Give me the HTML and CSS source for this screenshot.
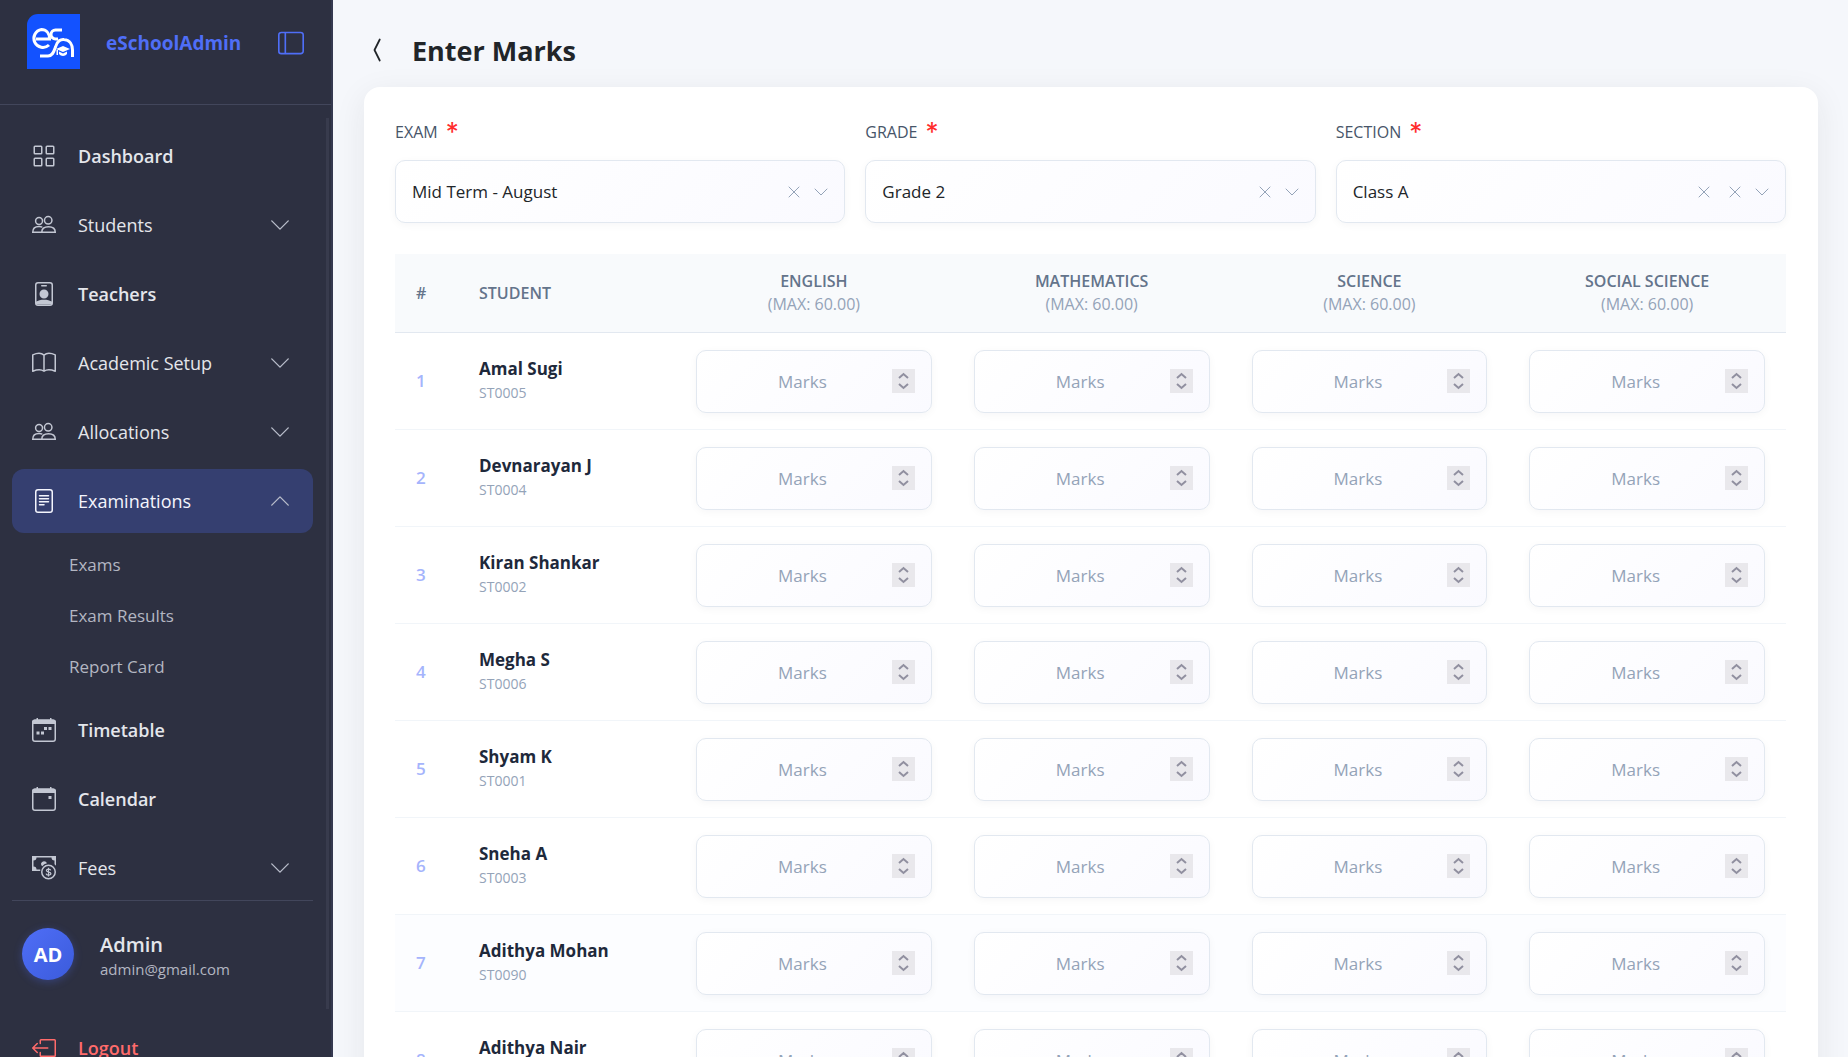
FILE: index.html
```html
<!DOCTYPE html>
<html lang="en">
<head>
    <meta charset="UTF-8">
    <meta name="viewport" content="width=device-width, initial-scale=1.0">
    <title>Enter Marks - eSchoolAdmin</title>
    <link rel="stylesheet" href="styles.css">
</head>
<body>

    <!-- Icons used more than once -->
    <svg class="icon-defs" aria-hidden="true">
        <symbol id="icon-people" viewBox="0 0 16 16"><g fill="none" stroke="currentColor"><circle cx="10.8" cy="4.9" r="2.500"/><circle cx="4.7" cy="5.3" r="2.300"/><path d="M6.500 12.800c0-2.400 1.600-3.700 4.500-3.700s4.500 1.300 4.500 3.700z"/><path d="M6.400 12.800H.5c0-2.300 1.500-3.800 4.200-3.800 1 0 1.600.1 2.200.5"/></g></symbol>
        <symbol id="icon-down" viewBox="0 0 16 16"><path fill="none" stroke="currentColor" stroke-linecap="round" stroke-linejoin="round" d="M2 5l6 6 6-6"/></symbol>
        <symbol id="icon-x" viewBox="0 0 16 16"><path fill="none" stroke="currentColor" stroke-linecap="round" d="M3 3l10 10M13 3L3 13"/></symbol>
    </svg>

    <!-- Sidebar Navigation -->
    <aside class="sidebar">
        <div class="sidebar-header">
            <svg class="logo" viewBox="0 0 53 55" role="img" aria-label="eSchoolAdmin logo">
                <path fill="#1352ff" d="M11 0H53V55H0V11A11 11 0 0 1 11 0z"/>
                <g fill="none" stroke="#fff" stroke-width="3">
                    <path d="M9 25H22.500C22.500 19 19 15.500 14.500 15.500A9 9 0 1 0 22 31"/>
                    <path d="M35 16H28.500A4.500 4.500 0 0 0 28.500 25H31"/>
                    <path d="M13 42H21C26 42 27 37 28.500 33C30 27 34 25 37 25.500C43 26 45.500 31 45.500 36V43"/>
                </g>
                <path fill="#fff" d="M29 35l7-3 7 3-7 3zM32 37.500l4 2 4-2V40c-2 2.500-6 2.500-8 0zM29.500 36h1.500v5h-1.500z"/>
            </svg>
            <span class="brand">eSchoolAdmin</span>
            <button class="toggle-button" type="button" aria-label="Toggle sidebar">
                <svg viewBox="0 0 16 16"><path fill="none" stroke="currentColor" d="M2 1.500h12A1.500 1.500 0 0 1 15.500 3v10a1.500 1.500 0 0 1-1.500 1.500H2A1.500 1.500 0 0 1 .5 13V3A1.500 1.500 0 0 1 2 1.500zM4.500 1.500v13"/></svg>
            </button>
        </div>

        <div class="sidebar-body">
            <nav>
                <ul class="menu">
                    <li><a class="menu-item strong" href="#">
                        <svg class="menu-icon" viewBox="0 0 16 16"><g fill="none" stroke="currentColor"><rect x="1.500" y="1.500" width="5" height="5" rx=".5"/><rect x="9.500" y="1.500" width="5" height="5" rx=".5"/><rect x="1.500" y="9.500" width="5" height="5" rx=".5"/><rect x="9.500" y="9.500" width="5" height="5" rx=".5"/></g></svg>
                        Dashboard</a></li>
                    <li><a class="menu-item" href="#">
                        <svg class="menu-icon"><use href="#icon-people"/></svg>
                        Students <svg class="menu-arrow"><use href="#icon-down"/></svg></a></li>
                    <li><a class="menu-item strong" href="#">
                        <svg class="menu-icon" viewBox="0 0 16 16"><rect x="2.500" y=".5" width="11" height="15" rx="1.500" fill="none" stroke="currentColor"/><path fill="currentColor" d="M6.500 2h3a.5.5 0 0 1 0 1h-3a.5.5 0 0 1 0-1zM11 8a3 3 0 1 1-6 0 3 3 0 0 1 6 0zM2.500 13.200C4 12.200 6 11.800 8 11.800s4 .4 5.500 1.400V15h-11z"/></svg>
                        Teachers</a></li>
                    <li><a class="menu-item" href="#">
                        <svg class="menu-icon" viewBox="0 0 16 16"><path fill="none" stroke="currentColor" stroke-linejoin="round" d="M8 2.700v10.800C6.300 12.300 3.300 12.400.5 13.500V2.600C3 1.500 6.300 1.300 8 2.700c1.700-1.400 5-1.200 7.500-.1v10.900c-2.800-1.100-5.800-1.200-7.500 0"/></svg>
                        Academic Setup <svg class="menu-arrow"><use href="#icon-down"/></svg></a></li>
                    <li><a class="menu-item" href="#">
                        <svg class="menu-icon"><use href="#icon-people"/></svg>
                        Allocations <svg class="menu-arrow"><use href="#icon-down"/></svg></a></li>
                    <li>
                        <a class="menu-item active" href="#">
                            <svg class="menu-icon" viewBox="0 0 16 16"><g fill="none" stroke="currentColor"><rect x="2.500" y=".5" width="11" height="15" rx="1.500"/><path stroke-linecap="round" d="M5 4.500h6M5 6.500h6M5 8.500h6M5 10.500h3"/></g></svg>
                            Examinations <svg class="menu-arrow up"><use href="#icon-down"/></svg></a>
                        <ul class="submenu">
                            <li><a href="#">Exams</a></li>
                            <li><a href="#">Exam Results</a></li>
                            <li><a href="#">Report Card</a></li>
                        </ul>
                    </li>
                    <li><a class="menu-item strong" href="#">
                        <svg class="menu-icon" viewBox="0 0 16 16"><rect x=".5" y="1.500" width="15" height="14" rx="1.500" fill="none" stroke="currentColor"/><path fill="currentColor" d="M3 0h1v1h8V0h1v1h1a2 2 0 0 1 2 2v1H0V3a2 2 0 0 1 2-2h1zM11 6h2v2h-2zM8 6h2v2H8zM3 9h2v2H3zM6 9h2v2H6z"/></svg>
                        Timetable</a></li>
                    <li><a class="menu-item strong" href="#">
                        <svg class="menu-icon" viewBox="0 0 16 16"><rect x=".5" y="1.500" width="15" height="14" rx="1.500" fill="none" stroke="currentColor"/><path fill="currentColor" d="M3 0h1v1h8V0h1v1h1a2 2 0 0 1 2 2v1H0V3a2 2 0 0 1 2-2h1zM11 6h2v2h-2z"/></svg>
                        Calendar</a></li>
                    <li><a class="menu-item" href="#">
                        <svg class="menu-icon" viewBox="0 0 16 16"><path fill="currentColor" d="M0 0h16v6.500a5 5 0 0 0-1-1V3a2 2 0 0 1-2-2H3a2 2 0 0 1-2 2v4a2 2 0 0 1 2 2h2.500v1H0z"/><path fill="currentColor" d="M10 4.800A2.100 2.100 0 0 0 6 5a2 2 0 0 0 .8 1.800A6 6 0 0 1 10 4.800z"/><circle cx="11" cy="10.700" r="4.500" fill="none" stroke="currentColor"/><path fill="none" stroke="currentColor" stroke-width=".8" d="M12.500 9.600c-.2-1.100-2.900-1.200-2.900.1s3 .7 3 2-3 1.400-3.200 0M11 7.800v5.800"/></svg>
                        Fees <svg class="menu-arrow"><use href="#icon-down"/></svg></a></li>
                </ul>
            </nav>

            <!-- Signed in user -->
            <div class="user">
                <div class="avatar">AD</div>
                <div class="user-text">
                    <div class="user-name">Admin</div>
                    <div class="user-email">admin@gmail.com</div>
                </div>
            </div>

            <button class="menu-item strong logout-button" type="button">
                <svg class="menu-icon" viewBox="0 0 16 16"><g fill="none" stroke="currentColor" stroke-linecap="round" stroke-linejoin="round"><path d="M5.500 5V3a.5.5 0 0 1 .5-.5h9a.5.5 0 0 1 .5.500v10a.5.5 0 0 1-.5.500H6a.5.5 0 0 1-.5-.5v-2"/><path d="M10.500 8H.7M3.500 5l-3 3 3 3"/></g></svg>
                Logout</button>
        </div>
    </aside>

    <!-- Main Content Area -->
    <main class="main-content">
        <div class="page-header">
            <a class="back-link" href="#" aria-label="Back">
                <svg viewBox="0 0 16 16"><path fill="none" stroke="currentColor" stroke-linecap="round" stroke-linejoin="round" d="M9 2L6 8l3 6"/></svg>
            </a>
            <h1>Enter Marks</h1>
        </div>

        <div class="card">
            <form class="filters">
                <div class="field">
                    <label for="exam">EXAM <span class="required">*</span></label>
                    <div class="select-box">
                        <select id="exam"><option>Mid Term - August</option></select>
                        <div class="select-icons">
                            <button type="button" aria-label="Clear exam"><svg><use href="#icon-x"/></svg></button>
                            <svg><use href="#icon-down"/></svg>
                        </div>
                    </div>
                </div>
                <div class="field">
                    <label for="grade">GRADE <span class="required">*</span></label>
                    <div class="select-box">
                        <select id="grade"><option>Grade 2</option></select>
                        <div class="select-icons">
                            <button type="button" aria-label="Clear grade"><svg><use href="#icon-x"/></svg></button>
                            <svg><use href="#icon-down"/></svg>
                        </div>
                    </div>
                </div>
                <div class="field">
                    <label for="section">SECTION <span class="required">*</span></label>
                    <div class="select-box">
                        <select id="section"><option>Class A</option></select>
                        <div class="select-icons">
                            <button class="reset" type="button" aria-label="Reset section"><svg><use href="#icon-x"/></svg></button>
                            <button type="button" aria-label="Clear section"><svg><use href="#icon-x"/></svg></button>
                            <svg><use href="#icon-down"/></svg>
                        </div>
                    </div>
                </div>
            </form>

            <table class="marks-table">
                <thead>
                    <tr>
                        <th class="col-number">#</th>
                        <th class="col-student">STUDENT</th>
                        <th class="col-subject">ENGLISH <span>(MAX: 60.00)</span></th>
                        <th class="col-subject">MATHEMATICS <span>(MAX: 60.00)</span></th>
                        <th class="col-subject">SCIENCE <span>(MAX: 60.00)</span></th>
                        <th class="col-subject">SOCIAL SCIENCE <span>(MAX: 60.00)</span></th>
                    </tr>
                </thead>
                <tbody id="marks-body"></tbody>
            </table>
        </div>
    </main>

    <script>
        const subjects = ['English', 'Mathematics', 'Science', 'Social Science'];
        const students = [
            ['Amal Sugi', 'ST0005'],
            ['Devnarayan J', 'ST0004'],
            ['Kiran Shankar', 'ST0002'],
            ['Megha S', 'ST0006'],
            ['Shyam K', 'ST0001'],
            ['Sneha A', 'ST0003'],
            ['Adithya Mohan', 'ST0090'],
            ['Adithya Nair', 'ST0091']
        ];
        const currentRow = 6;

        // One row for each student, one marks input for each subject
        document.getElementById('marks-body').innerHTML = students.map(([name, id], i) => `
            <tr${i === currentRow ? ' class="current"' : ''}>
                <td class="row-number">${i + 1}</td>
                <td>
                    <div class="student-name">${name}</div>
                    <div class="student-id">${id}</div>
                </td>
                ${subjects.map(subject => `<td><input class="marks-input" type="number" min="0" max="60" placeholder="Marks" aria-label="${subject} marks for ${name}"></td>`).join('')}
            </tr>`).join('');
    </script>

</body>
</html>
```
FILE: styles.css
```css
* {
    box-sizing: border-box;
}

body {
    font-family: "Open Sans", "Noto Sans", sans-serif;
    margin: 0;
    display: flex;
    height: 100vh;
    overflow: hidden;
    background-color: #f5f7fb;
    color: #212529;
}

button, input, select {
    font-family: inherit;
}

button {
    border: none;
    background: none;
    padding: 0;
    cursor: pointer;
}

svg {
    display: block;
}

ul {
    list-style-type: none;
    margin: 0;
    padding: 0;
}

a {
    color: inherit;
    text-decoration: none;
}

.icon-defs {
    display: none;
}

/* Sidebar styles */
.sidebar {
    width: 333px;
    flex-shrink: 0;
    height: 100vh;
    overflow: hidden;
    display: flex;
    flex-direction: column;
    background-color: #2d3041;
    border-right: 2px solid #353950;
    color: #e4e6eb;
}

.sidebar-header {
    display: flex;
    align-items: flex-start;
    height: 105px;
    flex-shrink: 0;
    padding: 14px 27px 0 27px;
    border-bottom: 1px solid #42465b;
}

.logo {
    width: 53px;
    height: 55px;
}

.brand {
    margin-left: 26px;
    line-height: 58px;
    font-size: 19px;
    font-weight: 700;
    color: #4f6ef7;
}

.toggle-button {
    margin-left: auto;
    margin-top: 16px;
    color: #4f6ef7;
}

.toggle-button svg {
    width: 26px;
    height: 26px;
}

.sidebar-body {
    flex: 1;
    min-height: 0;
    margin: 13px 2px 48px 0;
    padding: 6px 13px 0 12px;
    border-right: 3px solid #383b4d;
}

.menu-item {
    display: flex;
    align-items: center;
    gap: 22px;
    width: 100%;
    height: 64px;
    margin-bottom: 5px;
    padding: 0 22px 0 20px;
    border-radius: 12px;
    font-size: 18px;
    color: #e4e6eb;
}

.menu-item.strong {
    font-weight: 600;
}

.menu-item.active {
    margin-bottom: 0;
    background-color: #353f70;
    color: #f4f5fd;
}

.menu > li:last-child .menu-item {
    margin-bottom: 0;
}

.menu-icon {
    width: 24px;
    height: 24px;
    color: #c3c7d3;
}

.active .menu-icon {
    color: #f4f5fd;
}

.menu-arrow {
    width: 22px;
    height: 22px;
    margin-left: auto;
    color: #b9bdca;
}

.menu-arrow.up {
    transform: rotate(180deg);
}

.submenu {
    padding: 6px 0;
}

.submenu a {
    display: block;
    padding-left: 57px;
    font-size: 17px;
    line-height: 51px;
    color: #b3b6c2;
}

.user {
    display: flex;
    align-items: center;
    gap: 26px;
    height: 106px;
    margin-bottom: 10px;
    padding-left: 10px;
    border-top: 1px solid #42465b;
}

.avatar {
    width: 52px;
    height: 52px;
    border-radius: 50%;
    background: linear-gradient(135deg, #4f6ef7, #3b5bdb);
    box-shadow: 0 2px 8px rgba(79, 110, 247, 0.3);
    color: white;
    font-size: 20px;
    font-weight: 700;
    line-height: 54px;
    text-align: center;
}

.user-text {
    padding-top: 4px;
}

.user-name {
    font-size: 20px;
    font-weight: 600;
    line-height: 26px;
}

.user-email {
    font-size: 15px;
    line-height: 22px;
    color: #b3b6c2;
}

.menu-item.logout-button {
    color: #ff6b6b;
}

.logout-button .menu-icon {
    color: #ff6b6b;
}

/* Main content */
.main-content {
    flex: 1;
    min-width: 0;
    padding: 26px 30px 0 31px;
}

.page-header {
    display: flex;
    align-items: center;
    gap: 20px;
    height: 48px;
    margin-bottom: 13px;
}

.back-link svg {
    width: 28px;
    height: 28px;
}

.page-header h1 {
    margin: 0;
    font-size: 27px;
    font-weight: 700;
}

.card {
    padding: 31px 32px 31px 31px;
    background-color: white;
    border-radius: 16px;
    box-shadow: 0 8px 32px rgba(33, 37, 41, 0.08);
}

/* Filters */
.filters {
    display: grid;
    grid-template-columns: repeat(3, 1fr);
    gap: 20px;
    margin-bottom: 31px;
}

.field label {
    display: flex;
    align-items: center;
    gap: 8px;
    height: 28px;
    margin-bottom: 14px;
    font-size: 16px;
    color: #475569;
}

.required {
    font-family: Inter, sans-serif;
    font-size: 26px;
    line-height: 28px;
    color: #ff2d2d;
}

.select-box {
    display: grid;
}

.select-box select, .select-icons {
    grid-area: 1 / 1;
}

.select-box select, .marks-input {
    width: 100%;
    height: 63px;
    padding: 0 16px;
    border: 1px solid #e2e8f0;
    border-radius: 10px;
    background: linear-gradient(135deg, #ffffff, #fafaff);
    box-shadow: 0 2px 8px rgba(33, 37, 41, 0.04);
    font-size: 17px;
    color: #212529;
}

.select-box select {
    appearance: none;
}

.select-icons {
    display: flex;
    align-items: center;
    justify-self: end;
    gap: 11px;
    padding-right: 16px;
    color: #94a3b8;
    pointer-events: none;
}

.select-icons svg {
    width: 16px;
    height: 16px;
}

.select-icons button {
    color: inherit;
    pointer-events: auto;
}

.select-icons .reset {
    margin-right: 4px;
}

/* Marks table */
.marks-table {
    width: 100%;
    table-layout: fixed;
    border-collapse: separate;
    border-spacing: 0;
}

.marks-table th {
    height: 79px;
    padding: 0 21px;
    background-color: #f8fafc;
    border-bottom: 1px solid #e2e8f0;
    font-size: 16px;
    font-weight: 600;
    line-height: 23px;
    text-align: left;
    color: #64748b;
}

.marks-table .col-number {
    width: 63px;
}

.marks-table .col-student {
    width: 217px;
}

.marks-table .col-subject {
    text-align: center;
}

.col-subject span {
    display: block;
    font-weight: 400;
    color: #94a3b8;
}

.marks-table td {
    height: 97px;
    padding: 16px 21px;
    border-bottom: 1px solid #f1f5f9;
    line-height: 24px;
}

.marks-table .current td {
    background-color: #fcfdff;
}

.marks-table .row-number {
    font-size: 17px;
    font-weight: 600;
    color: #a5b4fc;
}

.student-name {
    font-size: 17px;
    font-weight: 700;
    color: #1e293b;
}

.student-id {
    font-size: 14px;
    color: #94a3b8;
}

.marks-input {
    display: block;
    text-align: center;
}

.marks-input::placeholder {
    color: #94a3b8;
}

.marks-input::-webkit-inner-spin-button {
    appearance: none;
    width: 23px;
    height: 24px;
    opacity: 1;
    background: #e9e8ec url("data:image/svg+xml,%3Csvg xmlns='http://www.w3.org/2000/svg' viewBox='0 0 23 24'%3E%3Cpath fill='none' stroke='%239190a0' stroke-width='2' d='M7 9l4.500-4 4.500 4M7 15l4.500 4 4.500-4'/%3E%3C/svg%3E");
}
```
